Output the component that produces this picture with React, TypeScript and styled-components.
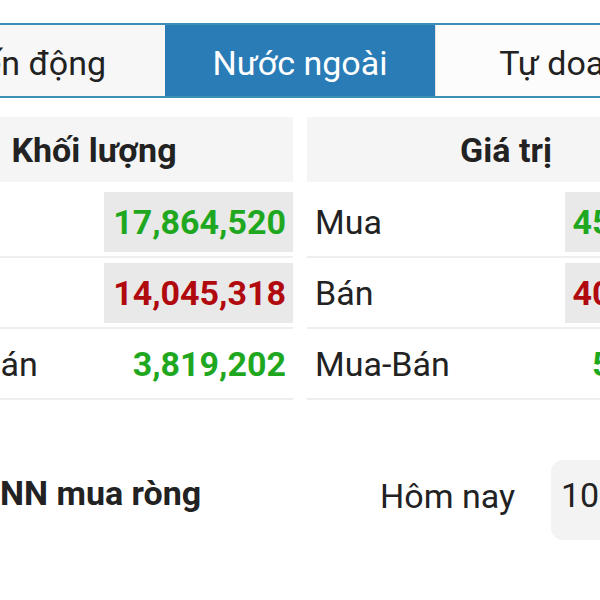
import React from 'react'
import styled, { createGlobalStyle } from 'styled-components'

const GlobalStyle = createGlobalStyle`
  html, body {
    margin: 0;
    padding: 0;
    background: #fff;
    font-family: Roboto, "Noto Sans", sans-serif;
    color: #222;
  }
`

type Row = { label: string; value: string; color: string; shaded: boolean }

const volumeRows: Row[] = [
  { label: 'Mua', value: '17,864,520', color: '#1fa81f', shaded: true },
  { label: 'Bán', value: '14,045,318', color: '#b10a0e', shaded: true },
  { label: 'Mua-Bán', value: '3,819,202', color: '#1fa81f', shaded: false },
]

const valueRows: Row[] = [
  { label: 'Mua', value: '457,612', color: '#1fa81f', shaded: true },
  { label: 'Bán', value: '402,195', color: '#b10a0e', shaded: true },
  { label: 'Mua-Bán', value: '55,417', color: '#1fa81f', shaded: false },
]

const tabs = ['Biến động', 'Nước ngoài', 'Tự doanh']

const StatTable: React.FC<{ title: string; rows: Row[]; cellWidth: number }> = ({ title, rows, cellWidth }) => (
  <Panel>
    <PanelHeader>{title}</PanelHeader>
    {rows.map(row => (
      <TableRow key={row.label}>
        <Label>{row.label}</Label>
        <ValueCell $width={cellWidth} $color={row.color} $shaded={row.shaded}>
          {row.value}
        </ValueCell>
      </TableRow>
    ))}
  </Panel>
)

export default function App() {
  return (
    <Screen>
      <GlobalStyle />
      <Content>
        <TabBar>
          {tabs.map((tab, i) => (
            <Tab key={tab} $active={i === 1} $divider={i === 2}>
              {tab}
            </Tab>
          ))}
        </TabBar>
        <Panels>
          <StatTable title="Khối lượng" rows={volumeRows} cellWidth={189} />
          <StatTable title="Giá trị" rows={valueRows} cellWidth={140} />
        </Panels>
        <BottomRow>
          <SectionTitle>NN mua ròng</SectionTitle>
          <PeriodGroup>
            <PeriodLabel>Hôm nay</PeriodLabel>
            <PeriodBox>10 ngày</PeriodBox>
          </PeriodGroup>
        </BottomRow>
      </Content>
    </Screen>
  )
}

const Screen = styled.div`
  width: 600px;
  height: 600px;
  overflow: hidden;
  background: #fff;
`

const Content = styled.div`
  width: 810px;
  margin-left: -105px;
  padding-top: 23px;
`

const TabBar = styled.div`
  display: grid;
  grid-template-columns: repeat(3, 1fr);
  border-top: 2px solid #3d8fb5;
  border-bottom: 2px solid #3d8fb5;
`

const Tab = styled.div<{ $active: boolean; $divider: boolean }>`
  box-sizing: border-box;
  height: 71px;
  display: flex;
  align-items: center;
  justify-content: center;
  padding-top: 4px;
  font-size: 34px;
  color: ${({ $active }) => ($active ? '#fff' : '#222')};
  background: ${({ $active, $divider }) => ($active ? '#2a7cb7' : $divider ? '#fcfcfc' : '#f7f7f7')};
  border-left: ${({ $divider }) => ($divider ? '1px solid #e2e2e2' : 'none')};
`

const Panels = styled.div`
  display: grid;
  grid-template-columns: 398px 398px;
  gap: 14px;
  margin-top: 19px;
`

const Panel = styled.div`
  display: flex;
  flex-direction: column;
`

const PanelHeader = styled.div`
  height: 65px;
  display: flex;
  align-items: center;
  justify-content: center;
  background: #f5f5f5;
  font-size: 34px;
  font-weight: 700;
  margin-bottom: 5px;
`

const TableRow = styled.div`
  box-sizing: border-box;
  height: 71px;
  display: flex;
  align-items: center;
  justify-content: space-between;
  padding: 5px 0 4px 8px;
  border-bottom: 2px solid #eeeeee;
`

const Label = styled.span`
  font-size: 34px;
  color: #222;
`

const ValueCell = styled.div<{ $width: number; $color: string; $shaded: boolean }>`
  box-sizing: border-box;
  width: ${({ $width }) => $width}px;
  height: 60px;
  display: flex;
  align-items: center;
  justify-content: flex-end;
  padding-right: 7px;
  background: ${({ $shaded }) => ($shaded ? '#e9e9e9' : 'transparent')};
  color: ${({ $color }) => $color};
  font-size: 34px;
  font-weight: 700;
`

const BottomRow = styled.div`
  display: flex;
  align-items: center;
  justify-content: space-between;
  margin-top: 60px;
  padding: 0 8px 0 105px;
`

const SectionTitle = styled.span`
  padding-bottom: 15px;
  font-size: 34px;
  font-weight: 700;
  color: #222;
`

const PeriodGroup = styled.div`
  display: flex;
  align-items: center;
  gap: 36px;
`

const PeriodLabel = styled.span`
  padding-bottom: 9px;
  font-size: 34px;
  color: #222;
`

const PeriodBox = styled.div`
  box-sizing: border-box;
  width: 146px;
  height: 80px;
  display: flex;
  align-items: center;
  padding: 0 0 10px 10px;
  background: #f3f3f3;
  border-radius: 12px;
  font-size: 34px;
  color: #222;
`
